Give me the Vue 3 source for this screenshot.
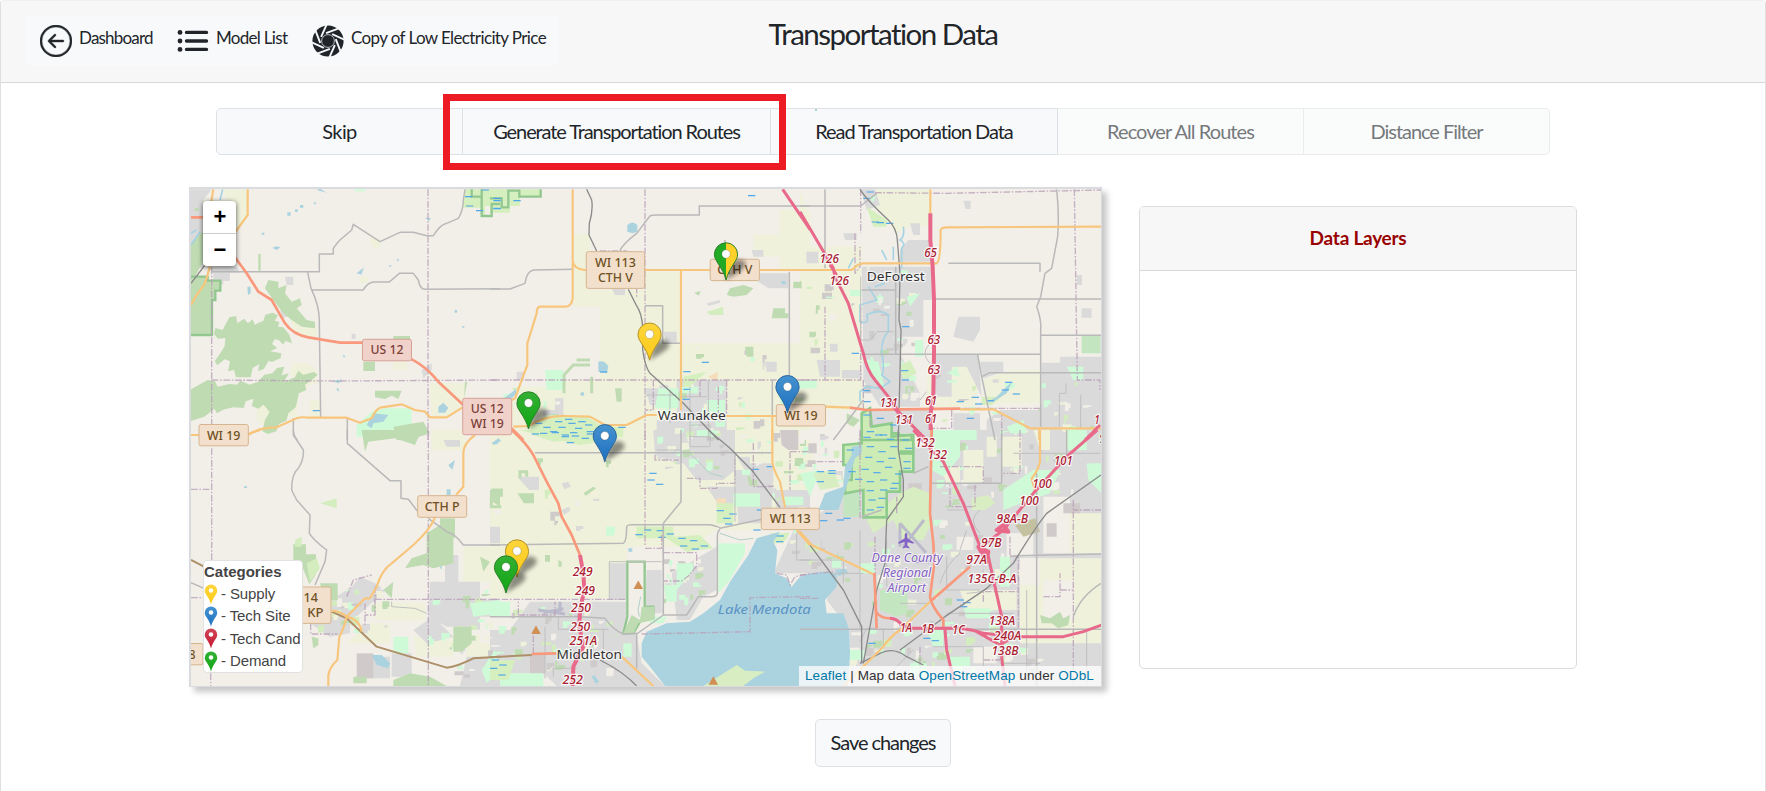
<script setup>
// Map drawing is split in six sheets; every sheet uses units of a third of a pixel.
const origin = {
  A: [180, 180], B: [180, 430],
  C: [490, 180], D: [490, 430],
  E: [800, 180], F: [800, 430],
}
const place = (s) => `translate(${origin[s][0]} ${origin[s][1]}) scale(0.33333)`

const areas = [
  // farmland
  ['C', 'farm', 'M250 163H300V330H465V275H570V490H960V780H0V690H60L80 620H200V600H330V380H250Z M790 165h105v65h-105z M870 90h90v180h-90z'],
  ['D', 'farm', 'M0 0H960V300H680L600 350H410V505H0Z'],
  ['E', 'farm', 'M0 28L30 130V200H185V600L200 690H0Z M230 28h160v110h-60l-40 20-60-70z M380 590l70-60h60v40h20v110h-150z M545 600l90-30h90v100h-160z'],
  ['A', 'farm', 'M130 28h75v80l-40 50z M340 550h40l30 20v40l-40 10-40-40z M310 710l30-110h20l-10 110z M750 610h110l-10 70-50 30h-45z M330 420l80 20v30l-60-5z M570 175h30v30h-20z M540 290h25v20h-25z M640 545h40v25h-40z M390 660h30v50h-30z M230 640l40-10 20 60-30 50-30-20z'],
  ['B', 'farm', 'M850 350h110v105h-110z M585 520h150v50h-150z M500 640h130v-60h-60z M755 0h100v60h-100z M700 620h120v60h-110z M860 640h100v40h-100z'],
  // residential
  ['A', 'urban', 'M33 28H95L70 60V265H33Z M80 260H170l10 18h-80z M100 278h50v25h-20v10h-30z M315 290h25v25h-20z M725 570l30-20v20l-25 25z M300 390l30-5v20l-20 10z M515 462h12v14h-12z'],
  ['B', 'urban', 'M455 510l60-40 25-30 45 20 30 20-20 20-60 55-40 20-40-30z M750 455H795V375H835V455H900V510H960V560H900V600L850 590H800L745 560Z M545 680h85v65h-85z M635 670h60v70h-60z M930 290h30v50h-30z M390 560h120v50l-60 10-60-40z M700 600l60-40 60 60-80 20z M860 680h100v88h-120z M790 30h50v20h-40z'],
  ['C', 'urban', 'M800 280h95v45h-60l-30-20z M465 625h95v50h-80z M560 600h150v180H500v-60h60z M195 655h25v35h-25z M365 325h40v20h-30z M520 455h40v35h-30z M825 545h35v30h-30z M785 210h35v20h-30z M950 215h10v35h-10z M80 575h22v25h-22z M650 370l40-10v8l-35 10z M160 690h60v20h-60z'],
  ['D', 'urban', 'M490 0H735V120L700 150H620L580 100H560L495 75Z M740 80h40v20h70v60h-60z M120 515H410V600L440 615L455 700L525 768H200L160 730H30V600H60Z M360 400h50v110h-50z M470 420h45v130h-20l-30-30z M545 430L680 350V480L640 500 600 570H560z M82 140h65v40h-30z M850 180h110v120h-90z M735 120h110v160h-100z M215 160l20-5 8 15-20 8z M215 240l20-10 8 10-20 15z M650 170h90v60h-50z M0 600h60v80h-60z'],
  ['E', 'urban', 'M182 28L225 28 240 75 200 90z M185 260H395V360H370V470H300V520L360 640V680H240L190 600V520Z M300 210L325 180H390V245H300z M405 525H535L545 650 500 560H455V650H400Z M540 545h70v30l-60 20z M725 548H780V530H905V780H560V720L600 690H725Z M475 410h65v40l-20 35-60-15z M845 385h30v28h-30z M20 215h35v35h-35z M330 130h30v35h-20z M50 540h70v50h-60z M125 570h60v25h-60z M130 160h40v20h-35z M490 62h22v25h-15z M830 285h16v30h-16z M200 690h190v90h-190z M460 700h80v50h-80z'],
  ['F', 'urban', 'M180 0H905V768H150V600L80 510 110 430 -80 430 0 260 60 250 150 180z'],
  // mixed land
  ['F', 'farm', 'M490 60h60v100h-60z M605 20h60v90h-60z M480 480h170v60h-150z M660 385H905V640H660z M810 250h95v120h-95z M420 110h60v50h-40z M700 0h50v60h-30z M560 20h30v60h-30z'],
  ['F', 'land', 'M730 200h80v170h-80z M660 385h60v80h-60z M520 650h70v50h-70z M730 450h90v120h-90z M0 0h60v30h-60z M620 310h80v70h-80z M300 10h70v40h-70z M470 320h50v40h-50z'],
  ['F', 'field', 'M325 160h40v90h-40z M25 40h25v30h-25z M790 220h50v30h-50z M740 280h30v40h-30z'],
  ['B', 'field', 'M530 670h50v75h-50z'],
  ['D', 'field', 'M870 0h55v60h-30l-20-15z M120 672h45v60h-45z'],
  ['F', 'olive', 'M645 285l60-20 15 40-50 15z'],
  ['C', 'peach', 'M655 590l30-15-5 30z'],
  ['D', 'peach', 'M680 205h28v22h-28z'],
  // parks
  ['A', 'park', 'M530 735l45-40 40-10h80v60l-15 20h-150z M525 28h30v6h-30z'],
  ['B', 'park', 'M530 0h130v20h-130z M640 620h45v50h-45z M870 520l90-10v40l-80 10z M905 720l40-60 15 60-40 40z'],
  ['C', 'park', 'M165 570h55v60h-50z M505 625h60v60h-70z M650 660h55v40h-50z M870 600h90v25h-90z M575 620h50v20h-50z'],
  ['D', 'park', 'M685 340h80v30l-45 80-35 40z M30 730h130v38h-130z M560 400h50v20l-50 60z M0 515h60v45h-60z M730 190h80v40h-80z M620 0h60v20h-60z M880 200h60v25h-60z M470 560h60l-10 20h-40z M520 465h40v50h-30z M400 640h25v40h-25z'],
  ['E', 'park', 'M0 600h50v25h-50z M395 750h135v30h-135z M185 535l50 10 20 80-40-30z M320 350l40-10-30 40z M345 480h25v50h-25z M150 330h35v18h-35z M800 560h50v40h-30z M620 740l50-20 10 40h-50z M200 55l30-10-10 20z M440 580l30-15 10 25z'],
  ['F', 'park', 'M395 0H480V80L430 140 395 120z M610 180l90-60h80l-30 70-60 20-80 30z M600 380h30v90h-30z M180 400h45v30h-45z M490 535h80v30h-70z M380 600h50v50h-30z M860 100h45v90l-40-40z M330 700h50v40h-50z M150 660h40v30h-40z M450 680h60v30h-60z M0 130l60-10-30 80z M800 0h60v60h-60z'],
  ['F', 'golf', 'M200 270l100-80 40-20 50 20v100l-20 40h-60l-30-60-60 40z M515 205l50-10 20 25-30 20h-40z M40 130l60-10 20 50-60 10z'],
  ['F', 'grove', 'M240 480H322V550L290 560L240 540z M130 190h50v70h-50z'],
  ['E', 'grove', 'M845 468H902V520H845z'],
  // woods
  ['A', 'wood', 'M33 290h50v12h38v30h-15v28h-10v105H33z'],
  ['A', 'wood', 'M265 300l30 5v20l25-10-5 25 20 25 25-10 5 20-15 10 30 35 25 5v20l-40-5-30-20-25-20-30-40-25-35z'],
  ['A', 'wood', 'M148 412l20-4 4 22 20-14 12 14 14-12 6 16 26-12 6-18 22-6 16 8-10 16 14 4-4 14 16 2 18 22 8 26-20-8-6 12-14-14-12-2-8 14 16 12-22 10 34 6-2 14-26 12-10-4-14 24-18 8 4-22-20 12-6 28h-44l-6-22-18 4 6-30-16-6-22 18-8-12 18-26 12-20 2-24-22 2-12-14 4-18 22 6 6-12z'],
  ['A', 'wood', 'M33 628l50-28 22 4 8 16 36-8 22 2 10-12 28 12 24-8 20-22 24-4 14-16 22-4-8 26 22-6-16 26 34-14 10-20 14 12 34-8 10 8-20 18-18 12 4 16-22 10-10 42-22 18-6 22-22 10-8 22-26 8-16-8 8-34 14-24-18-22-16 12-20-8 6-22-24 8-6 20-30-2-28 6-22 12-8-14-30 24-42 14z'],
  ['A', 'wood', 'M550 545h35v28h-35z M640 468h50v12h-50z M585 632h80l-10 25-20-10-20 10-30-5z M33 190l40-40v90l-40 70z M235 222h7v50h-7z M640 740l90-15 20 35-60 20h-40z M855 605h7l-10 50z'],
  ['B', 'wood', 'M780 265h45v60h-5v75l-60 15-30-10-55 10 20-30 45-15v-60l40-25z M340 343h38v30h30v60l-20 30-20-50-28-20z M420 460h53v50h-20l-30-40z M820 590h55v50l-30 25h-25z M640 750l50-20 60 10 50 28H640z M545 0h180l-20 45-60-20-80 10-10 30z M610 480l30-25-5 50z M395 620l20 5v20l-15 10z M930 180h30v50l-30-20z M900 380l30 15-20 30z M520 740h40v20h-40z'],
  ['C', 'wood', 'M720 325l40-10 30 10-20 20-40 5-20-5z M850 385h35v15h10v15h-50z M765 500h25v30h-20z M910 305h25v20h-25z M375 625h20v40h-15z M612 338l20-5-5 14z'],
  ['C', 'woodLine', 'M222 640V585L250 555H300 M260 540h40 M305 640v-50'],
  ['D', 'wood', 'M82 190h50v30h-30z M280 190l30-20 8 5-30 22z M165 375h15v20h-15z M205 390l10 5v15h-10z'],
  ['D', 'woodLine', 'M4 180h30v20M4 200v30h30 M90 145V125h20v15'],
  ['F', 'wood', 'M720 555l30 10 30-20 10 20 20-10-5 30-30 10-20-15-30 0z M135 445h15v10h-15z'],
  ['E', 'wood', 'M140 700l40 20-20 20-20-10z M0 300l5 10-5 10z'],
  ['C', 'lush', 'M650 395l50-15v25h-40z'],
  ['B', 'lush', 'M420 220l50-15v30z M380 400l30-15 10 30-30 40z M345 330l20-10v30h-20z'],
  // wetlands
  ['A', 'wet', 'M855 28h105v60l-20 5v-15h-25v30h-12v-25h-55z'],
  ['C', 'wet', 'M0 28h150v20h-60v30h-30v20h-60z M120 740l50-35 120 5 50 30h60v30l-110 5-100 10-60-20z M580 590l70-15-50 45h-20z'],
  ['D', 'wet', 'M90 0h240v35l-60 10-100-25z M440 290h110v30l80-5 40 40-80 10-60-40h-90z M680 220h50v60h-50z M0 690h75l-20 60H0z M840 310h60l-20 30h-30z'],
  ['E', 'wet', 'M200 80l60 40v20h-40z M545 650h60l-30 25h-30z M300 560l30-20 20 40-40 20z'],
  ['A', 'reserve', 'M33 290h50v12h38v30h-15v28h-10v105H33 M905 28v80h30V72h25 M875 28v22h30'],
  ['C', 'reserve', 'M152 28V50H88V32H55v50H35V55H0'],
  ['F', 'swamp', 'M130 45L185 40V10H295V15H340V65H300V70H340V125H300V185H260V262H190V180L135 190V150h20V105h-25z'],
  ['E', 'swamp', 'M185 780V700l25-15 5 55 60-10v40l60-5v15z'],
  ['D', 'reserve', 'M412 395H464V530H490V565L450 575 430 610H400L412 560Z'],
  ['D', 'wood', 'M400 610L425 555 450 570 455 530H492V568L445 580 430 612z'],
  // water
  ['D', 'water', 'M870 305L800 325L775 375L720 455L690 510L640 550L600 575L530 580L470 605L455 640V680L480 710L525 768H1075L1080 670L1078 600L1060 550L1010 550L1005 510L1040 470V430L1000 425L960 430L930 440L905 470L890 445L855 430L862 360L850 335Z'],
  ['D', 'golf', 'M640 768L740 705L765 722L825 725L790 745L760 768Z'],
  ['A', 'water', 'M560 735l20-35 45 5-15 20-30 5-5 15z M775 680l15-12 15 15-10 15h-20z M202 320h10v20l-8 5z M277 204l12-5 12 3-10 8z M735 113l18 2-6 8z M322 97h10v10h-10z M360 75h10v8h-10z M345 88h8v8h-8z M400 66l10 3-6 5z M245 158h8v6h-8z M457 604l30-6-10 12z M468 625l10 2-4 8z M488 525l8 2-4 8z M530 280l22-18-8 22z M625 257l10-3-4 8z M650 238h8l-5 8z M824 390h7v8h-7z M847 438h6v5h-6z M410 30l10-4 20 12z'],
  ['B', 'water', 'M575 675h30l25 25-5 15-35-10z M800 195v-17h12v17z M805 105l20-15-8 30z M935 40l20-15 8 8-20 12z M778 408l8 2-2 9z M192 169h9v5h-9z'],
  ['C', 'water', 'M412 135q15-15 30 0v20l-15 5-15-5z M325 545q20-5 30 15l-5 20-25-5z M42 655l36-28v15l-20 20z M270 640l10-5 3 10-8 4z M875 303h12v10h-12z'],
  ['D', 'water', 'M415 355h12v10h-12z M5 40l25-15-8 18z M340 20h10v8h-10z M305 740l8-5 14 20-10 6z'],
  ['E', 'water', 'M558 668L590 650 615 625 637 603 620 640 580 665z'],
  ['F', 'water', 'M55 240L75 190 130 170 135 110 155 75V50L185 45 185 70 165 85 150 140 115 240z M105 420l30-5 10 15-30 8z'],
  ['E', 'stream', 'M310 140q5 30-10 40q20 10 5 25v60 M245 210l15 30 M280 200v40 M205 320l25 40-50 15v50q30 10 20-20q40-20 65 0v50q-20 20-20 60q10 60 0 70l25 20-30 20-40-5-20 15v30 M160 235l-15 30 M225 320l30-10'],
  ['A', 'stream', 'M128 28L120 60 M33 195L60 155 M33 160 L50 150'],
  ['D', 'creek', 'M452 500l-8 40 4 20 M600 70l60 60 40 10 M690 310l60 20 40-5'],
  ['F', 'runway', 'M300 280L378 368M372 270L310 350M300 280V350M345 395h50'],
  ['D', 'runway', 'M145 540L225 552 M210 515V550 M160 548l60-12'],
]

const lines = [
  ['A', 'bound', 'M95 262V780 M744 28V780 M95 600L470 603 960 600'],
  ['B', 'bound', 'M95 55V390 M92 730V768 M33 178H95 M33 503H72 M745 0V768 M585 508H960 M500 500L520 450 575 435 M392 580v32h80 M555 520v70 M585 470v85h-30'],
  ['C', 'bound', 'M465 28V780 M0 600H960 M490 600V690H465 M710 600V700 M630 600V650 M685 620v80 M330 213h80 M440 320v30'],
  ['D', 'bound', 'M465 0V350 M0 508H410 M520 285V555 M455 612L780 605V503L960 500 M590 145H630V175H680V160H735V68 M520 368h100v40l-25 30-20 15H520 M85 555V515 M130 672V600 M900 65V180 M790 40V170H850 M495 75v15h70 M465 355h50v-40 M85 555h110v-40 M860 430l30 5 10 30 15-25 40-8 M900 65h60'],
  ['E', 'bound', 'M182 28V160 M225 38L440 40 905 30 M823 28L832 600H900V630 M182 380V600H0 M190 600V690H210V740 M720 685H480 M455 690V745H395 M75 380V600 M165 160v120l15-20v-60 M605 780V705'],
  ['F', 'bound', 'M420 110H550V160H525V230H450V165 M630 320V380H655V600 M0 435L100 425 M225 320V440 M820 210V768 M550 515V485H655 M780 480H820 M660 0V130H610 M730 500H780V430 M905 240l-85 0 M180 0v270 M50 95h80 M0 505h60 M290 250v-50 M360 650v90 M600 650v40h-50'],
  ['F', 'grey thin', 'M180 300v300 M100 430h90 M0 390h130v70 M440 380v100h100 M500 300l-20 60 M260 330v140 M230 595h-30l-20 40 M250 600v50 M400 650h150v60 M440 550h200 M440 240h60 M540 310q-40-40 0-70 M420 460q20-60 60-90 M500 490q60 0 100-40 M300 520h90 M680 480v260 M600 700h120 M860 600v168 M280 720l60-60 M640 70h260'],
  ['A', 'grey', 'M95 275H418V222H460V205Q470 190 480 180L515 150 520 133 600 185 660 157H700L740 167H760Q780 135 800 130L835 115Q850 90 850 60L855 28 M383 278L393 325Q420 380 418 430L422 712 M393 330H550Q560 310 580 306H628L658 280H700L715 300Q720 328 735 328L960 326 M340 715V755Q342 770 352 780 M502 715V780'],
  ['B', 'grey', 'M340 0V15L370 60Q372 90 355 115Q335 130 335 180L350 210 390 255 388 310Q400 330 440 360L435 395 405 465 M502 0V40L630 152H663V205L685 208 712 243 M745 265L800 305Q825 310 850 345L960 345 M33 458L72 475'],
  ['B', 'grey thin', 'M635 515v15l70 5 35 15'],
  ['C', 'grey', 'M0 327H60L105 310Q110 275 130 270L250 268 M390 213Q395 195 440 160L480 108Q485 105 500 105H628V78H960 M465 377H518V490H573 M898 275V605 M705 180v30 M847 600v110'],
  ['C', 'grey thin', 'M600 780V620 M655 600V780 M540 630v100 M465 645h95 M570 650h80 M600 735h60v45'],
  ['D', 'grey', 'M135 68H850 M573 0V215L520 280V555L440 612V715 M0 345L400 340Q410 335 410 290Q412 284 425 284H660Q690 290 690 295L815 268 M690 298Q682 305 682 320V490Q680 500 665 500H625L590 555H520 M440 610L400 612Q370 600 345 565L270 560H0'],
  ['D', 'grey thin', 'M358 508V395H515 M165 745V590 M205 560v38h150 M190 740v-25h70 M340 600v100 M735 75v200 M600 20h60v30h-60z M500 60h70 M920 310v80h40'],
  ['E', 'grey', 'M75 28V265 M0 78H182L230 40 M770 28Q778 100 773 170L755 265 735 280 722 350 710 380Q725 420 722 450V740 M445 250H720V275 M400 357H903 M722 466H903 M185 523H722 M533 525L545 590L585 780 M545 590L570 578H905 M287 260V520 M185 330H287 M100 780L190 660'],
  ['E', 'grey thin', 'M182 290V480h30l20-25h50 M778 740V640h20v-30 M842 645v100 M390 490q-30 30 0 60 M360 660l20-25'],
  ['F', 'grey', 'M395 160H605 M605 0V160 M630 378L903 372 M903 460Q840 500 820 560 M710 130V768 M800 0V75 M340 130L385 110 M0 598H905 M185 260l60-20'],
  // railways
  ['B', 'brown', 'M33 390L72 410 M455 545L500 565 590 650 800 713Q830 710 880 685L960 680'],
  ['D', 'brown', 'M0 682L125 675'],
  ['C', 'rail', 'M290 28L305 60Q310 90 298 130L297 165 320 213 M415 328L440 378Q455 400 458 440V510Q465 560 480 580L580 670 685 780'],
  ['D', 'rail', 'M655 0L720 55 785 120 870 232 M330 690Q400 725 440 768'],
  ['E', 'rail', 'M180 28Q200 60 265 120Q290 145 292 180L300 280 297 420 303 450 295 780'],
  ['F', 'rail', 'M295 0V60L310 150V200L260 270 255 400 230 480 190 700 M0 305L130 480 185 590V700 M903 135L740 250Q700 300 640 400L560 475 435 560 300 660 M180 700L240 670Q280 650 320 680L370 705'],
  ['A', 'rail', 'M33 310L75 255'],
  // primary and secondary roads
  ['A', 'orange', 'M100 28L92 75 M203 28V105L165 158 M90 260L75 310 50 345 33 375 M33 765H60 M205 765Q235 742 290 742L350 715Q365 710 385 713H500L540 728 575 715Q585 690 600 683L665 673 705 690 735 695 750 712H800L848 682'],
  ['B', 'orange', 'M205 12L240 0 M885 15Q850 40 850 70V170L828 195 M765 263Q750 300 700 345L635 400Q605 420 590 470L570 505H555L500 560Q475 540 455 543 M500 560Q540 570 545 605 M500 560Q490 600 478 620L472 690Q450 710 445 735V768'],
  ['C', 'orange', 'M248 28V235Q245 268 290 270H960 M248 250V355Q245 380 225 380H150Q140 382 140 400L112 490V555Q95 600 75 655L65 660 M573 270V690 M70 740L115 738Q170 705 230 708L300 710 345 735H410L470 705H500 M705 708H860 M847 710V780'],
  ['D', 'orange', 'M395 680L490 768 M847 0V95Q850 120 870 155L885 232 M920 300L960 345'],
  ['E', 'orange', 'M391 28V100 M0 270H155Q175 250 190 250H410Q422 245 422 150Q425 142 440 142L903 140 M75 680L150 683 M480 688H580L690 745H903 M718 745V780'],
  ['F', 'orange', 'M0 305L35 345 225 435 M390 515L300 600Q270 620 250 650L130 768 M720 0V95Q715 120 695 145L705 185'],
  // trunk roads
  ['A', 'trunk', 'M33 112H70 M165 232L200 280L235 335L275 360L315 430Q340 465 385 472L480 488H560 M690 535Q740 560 775 605L850 675'],
  ['C', 'trunk', 'M65 745L100 780'],
  ['D', 'trunk', 'M65 0Q110 40 130 75L170 155 205 220 215 260 245 315 270 375 M125 672L200 670'],
  ['E', 'trunk', 'M150 683L200 690 300 688 480 686 M395 740v40'],
  ['F', 'trunk', 'M395 0L390 250 400 340 403 400 390 500Q395 530 430 570V600 M390 515L510 410 M223 430L230 595 M228 545Q240 565 270 565'],
  // motorways
  ['C', 'motor', 'M878 28L960 148'],
  ['D', 'motor wide', 'M270 375L280 430 283 480 270 540 268 590 280 650 250 710 248 768'],
  ['E', 'motor', 'M0 95L100 265 105 290 145 370 190 520Q200 570 225 600L265 650 300 700 380 780 M90 255l20 30 M280 680l20 25'],
  ['E', 'motor wide', 'M391 100V180L398 260 402 360V520L400 640 392 700V750'],
  ['E', 'motor', 'M855 780L900 735'],
  ['F', 'motor', 'M340 0L385 50 430 95 490 220 540 350 565 380 605 560 605 680 615 768 M892 0L800 80 700 190 610 300 545 350 M270 565Q290 565 305 585L330 595H480Q520 600 550 610L650 620H790L850 605 905 585 M530 605L600 645 L640 620 M435 600L440 660 465 768'],
  ['F', 'motor wide', 'M535 350l30 15-5 30z M590 300l35 5-15-20z'],
]

// Short strokes that mark marshy ground: [sheet, x, y]
const marsh = [
  ...[[855, 50], [905, 30], [940, 55], [858, 78], [888, 92], [940, 85], [398, 692]].map((p) => ['A', ...p]),
  ...[[10, 62], [70, 62], [10, 86], [135, 730], [160, 742], [195, 725], [225, 718], [205, 742], [235, 730], [265, 725], [255, 745], [285, 735], [150, 760], [185, 758], [215, 765], [245, 768], [290, 755], [320, 745], [385, 742], [580, 575], [635, 547], [580, 628], [578, 658], [330, 576], [774, 47]].map((p) => ['C', ...p]),
  ...[[125, 12], [180, 5], [215, 20], [240, 8], [275, 25], [230, 38], [290, 12], [478, 130], [498, 163], [472, 150], [436, 314], [462, 300], [500, 302], [505, 322], [530, 312], [565, 325], [600, 332], [570, 348], [605, 357], [632, 348], [680, 242], [700, 265], [718, 252], [705, 282], [790, 300], [800, 240], [5, 690], [28, 705], [0, 715], [25, 735], [860, 318], [858, 335], [830, 110], [785, 118]].map((p) => ['D', ...p]),
  ...[[200, 36], [190, 55], [215, 126], [230, 128], [258, 130], [306, 440], [303, 572], [305, 600], [155, 520], [188, 632], [190, 665], [470, 665], [515, 652], [525, 672], [500, 715], [615, 607], [638, 642], [605, 630], [560, 662], [190, 705], [230, 715], [270, 735], [200, 755], [240, 765]].map((p) => ['E', ...p]),
  ...[[190, 22], [225, 15], [260, 28], [305, 30], [140, 60], [200, 50], [235, 65], [270, 50], [315, 55], [195, 82], [230, 95], [265, 85], [310, 95], [145, 125], [185, 118], [220, 128], [255, 112], [285, 132], [310, 115], [165, 148], [200, 155], [240, 150], [275, 160], [200, 182], [240, 180], [270, 175], [205, 210], [235, 205], [200, 240], [230, 232], [50, 155], [85, 130], [75, 250], [110, 270], [60, 272], [85, 122], [50, 125], [130, 265], [470, 510], [480, 530], [490, 518], [370, 625], [395, 632], [205, 640]].map((p) => ['F', ...p]),
]

// Deterministic scatter of small plots over built-up ground.
let seed = 7
const rand = () => ((seed = (seed * 16807) % 2147483647) / 2147483647)
const zones = [
  ['E', 190, 260, 170, 420, 34], ['E', 400, 540, 130, 200, 10], ['E', 560, 590, 340, 180, 26],
  ['F', 200, 290, 180, 280, 22], ['F', 400, 150, 240, 420, 44], ['F', 150, 570, 500, 180, 60],
  ['F', 400, 0, 420, 200, 34], ['F', 650, 380, 240, 370, 34], ['F', 0, 320, 190, 100, 16], ['F', 0, 0, 130, 180, 22],
  ['D', 500, 0, 230, 130, 24], ['D', 740, 0, 210, 220, 30], ['D', 130, 530, 260, 220, 40], ['D', 0, 520, 110, 220, 14],
  ['D', 520, 380, 150, 150, 22], ['D', 860, 200, 90, 200, 8], ['C', 500, 610, 210, 160, 26], ['C', 720, 610, 230, 160, 18],
  ['C', 590, 490, 250, 80, 8], ['C', 20, 620, 200, 120, 8], ['B', 740, 480, 210, 270, 36], ['B', 480, 470, 150, 140, 16],
  ['A', 40, 30, 120, 200, 16], ['D', 10, 80, 400, 250, 10], ['E', 10, 300, 160, 280, 12], ['B', 400, 500, 100, 120, 12],
]
const tones = ['park', 'farm', 'wood', 'land', 'park', 'urban', 'lush', 'deep']
const plots = zones.flatMap(([s, x, y, w, h, n]) =>
  Array.from({ length: n }, () => {
    const pw = 6 + rand() * 24
    const ph = 5 + rand() * 22
    const px = x + rand() * (w - pw)
    const py = y + rand() * (h - ph)
    const k = rand() * 0.5
    return {
      s,
      tone: tones[Math.floor(rand() * tones.length)],
      d: `M${px.toFixed(0)} ${py.toFixed(0)}h${pw.toFixed(0)}v${(ph * (1 - k)).toFixed(0)}h${(-pw * k).toFixed(0)}v${(ph * k).toFixed(0)}h${(-pw * (1 - k)).toFixed(0)}z`,
    }
  }),
)

const shields = [
  { x: 362.5, y: 339.3, w: 49, h: 21.5, t: ['US 12'], tw: [33], trunk: true },
  { x: 462.7, y: 398.3, w: 49, h: 36.4, t: ['US 12', 'WI 19'], tw: [33, 33], trunk: true },
  { x: 199, y: 424.5, w: 49.3, h: 21.3, t: ['WI 19'], tw: [33.5] },
  { x: 417.7, y: 495.7, w: 49, h: 21.6, t: ['CTH P'], tw: [35] },
  { x: 271, y: 587, w: 60, h: 36.4, t: ['US 14', 'CTH KP'], tw: [34, 45] },
  { x: 170, y: 643.5, w: 33, h: 21.3, t: ['78'], tw: [14], shift: 2 },
  { x: 586.3, y: 251.7, w: 58.3, h: 36.7, t: ['WI 113', 'CTH V'], tw: [41, 35] },
  { x: 710.2, y: 259.2, w: 49.2, h: 21.4, t: ['CTH V'], tw: [35] },
  { x: 776.3, y: 404.6, w: 49.2, h: 21.4, t: ['WI 19'], tw: [33.5] },
  { x: 761.3, y: 508.2, w: 58, h: 21.4, t: ['WI 113'], tw: [41] },
]

// Motorway exit numbers: [text, centre x, baseline y, width]
const exits = [
  ['126', 829.3, 263, 19.5], ['126', 839.3, 285.3, 19.5], ['65', 930.5, 256.8, 12.7], ['63', 933.8, 344, 12.7],
  ['63', 933.8, 374.3, 12.7], ['61', 931, 404.8, 12], ['61', 931, 423, 12], ['131', 888.7, 407.3, 18],
  ['131', 904, 424.3, 18], ['132', 925, 446.5, 19.5], ['132', 937.3, 458.8, 19.5], ['101', 1063.3, 465, 18.7],
  ['100', 1042, 488, 19.5], ['100', 1029, 504.7, 19.5], ['98A-B', 1012.3, 523.3, 31.5], ['97B', 991.3, 547, 20.5],
  ['97A', 976.5, 564, 20.5], ['135C-B-A', 992, 583.4, 49], ['138A', 1002, 625, 26.5], ['240A', 1007.5, 640, 27.5],
  ['138B', 1005, 655, 27], ['1A', 906, 631.5, 12], ['1B', 927.5, 633.4, 12.7], ['1C', 958.5, 633.8, 13],
  ['249', 582.7, 576, 20], ['249', 585, 595.4, 20], ['250', 581, 612, 20], ['250', 580.3, 630.7, 20],
  ['251A', 583.3, 644.7, 27.5], ['252', 572.7, 683.5, 20.5], ['1', 1097, 424, 5.5],
]

const peaks = [[638.3, 585], [536, 630], [713.3, 680.8]]

const pins = [
  { x: 787.5, y: 412.7, fill: 'blue' },
  { x: 726, y: 280, fill: 'split' },
  { x: 649.6, y: 360.2, fill: 'yellow' },
  { x: 528.5, y: 429, fill: 'green' },
  { x: 604.8, y: 461.8, fill: 'blue' },
  { x: 517, y: 577, fill: 'yellow' },
  { x: 506, y: 593, fill: 'green' },
]
const pinShape = 'M0 0C-1.6-6.5-4.4-11-8.2-17C-10.2-20.2-11.6-22.4-11.6-25.6A11.6 11.6 0 0 1 11.6-25.6C11.6-22.4 10.2-20.2 8.2-17C4.4-11 1.6-6.5 0 0Z'

const legend = [
  { name: 'Supply', fill: 'yellow' },
  { name: 'Tech Site', fill: 'blue' },
  { name: 'Tech Cand', fill: 'red' },
  { name: 'Demand', fill: 'green' },
]

const blades = Array.from({ length: 8 }, (_, i) => i * 45)
</script>

<template>
  <div class="page">
    <header class="topbar">
      <nav class="crumbs">
        <a class="crumb dash">
          <svg width="32" height="32" viewBox="0 0 16 16" fill="#212529"><path fill-rule="evenodd" d="M1 8a7 7 0 1 0 14 0A7 7 0 0 0 1 8m15 0A8 8 0 1 1 0 8a8 8 0 0 1 16 0m-4.5-.5a.5.5 0 0 1 0 1H5.707l2.147 2.146a.5.5 0 0 1-.708.708l-3-3a.5.5 0 0 1 0-.708l3-3a.5.5 0 1 1 .708.708L5.707 7.500z" stroke="#212529" stroke-width=".2" /></svg>
          <span>Dashboard</span>
        </a>
        <a class="crumb list">
          <svg width="32" height="32" viewBox="0 0 32 32"><g stroke="#212529" stroke-width="3.400" stroke-linecap="round"><path d="M9.500 7.400H29.500M9.500 16H29.500M9.500 24.400H29.500" /></g><g fill="#212529"><circle cx="3" cy="7.400" r="2.400" /><circle cx="3" cy="16" r="2.400" /><circle cx="3" cy="24.400" r="2.400" /></g></svg>
          <span>Model List</span>
        </a>
        <a class="crumb copy">
          <svg width="32" height="32" viewBox="-16 -16 32 32">
            <circle r="15.600" fill="#212529" />
            <g stroke="#f8f9fb" stroke-width="1.900"><path v-for="a in blades" :key="a" d="M-3.500-7.200L8.500-15" :transform="`rotate(${a + 12})`" /></g>
            <circle r="6.400" fill="#212529" stroke="#f8f9fb" stroke-width=".7" />
          </svg>
          <span>Copy of Low Electricity Price</span>
        </a>
      </nav>
      <h1 class="title">Transportation Data</h1>
    </header>

    <main class="content">
      <div class="steps">
        <button class="step skip"><span>Skip</span></button>
        <button class="step gen"><span>Generate Transportation Routes</span></button>
        <button class="step read"><span>Read Transportation Data</span></button>
        <button class="step recover" disabled><span>Recover All Routes</span></button>
        <button class="step filter" disabled><span>Distance Filter</span></button>
        <i class="speck"></i>
        <div class="highlight"></div>
      </div>

      <div class="panels">
        <section class="map">
          <svg class="canvas" width="910" height="497" viewBox="191 189 910 497">
            <defs>
              <linearGradient id="blue" x2="0" y2="1"><stop stop-color="#4793d0" /><stop offset="1" stop-color="#1b6fc0" /></linearGradient>
              <linearGradient id="green" x2="0" y2="1"><stop stop-color="#34b034" /><stop offset="1" stop-color="#0fa514" /></linearGradient>
              <linearGradient id="yellow" x2="0" y2="1"><stop stop-color="#fdd53a" /><stop offset="1" stop-color="#fccb1a" /></linearGradient>
              <linearGradient id="red" x2="0" y2="1"><stop stop-color="#cf4658" /><stop offset="1" stop-color="#c5162f" /></linearGradient>
              <linearGradient id="split"><stop offset=".5" stop-color="#22aa25" /><stop offset=".5" stop-color="#fdd02a" /></linearGradient>
              <filter id="soft" x="-50%" y="-50%" width="200%" height="200%"><feGaussianBlur stdDeviation="2" /></filter>
            </defs>
            <rect class="land" x="191" y="189" width="910" height="497" />
            <path v-for="(a, i) in areas.slice(0, 11)" :key="'a' + i" :class="a[1]" :transform="place(a[0])" :d="a[2]" />
            <path v-for="(p, i) in plots" :key="'p' + i" :class="p.tone" :transform="place(p.s)" :d="p.d" />
            <path v-for="(a, i) in areas.slice(11)" :key="'b' + i" :class="a[1]" :transform="place(a[0])" :d="a[2]" />
            <path v-for="(m, i) in marsh" :key="'m' + i" class="tick" :transform="place(m[0])" :d="`M${m[1]} ${m[2]}h22`" />
            <path v-for="(l, i) in lines" :key="'l' + i" class="line" :class="l[1]" :transform="place(l[0])" :d="l[2]" />

            <path v-for="(p, i) in peaks" :key="'k' + i" class="peak" :d="`M${p[0]} ${p[1] - 4.500}l4.800 8.500h-9.600z`" />
            <path class="plane" d="M906 533c1 0 1.300 1.400 1.300 2.600v2.600l6.300 4v1.600l-6.300-1.900v3.600l2 1.700v1.200l-3.300-.9-3.300.9v-1.200l2-1.700v-3.600l-6.300 1.900v-1.600l6.300-4v-2.600c0-1.200.3-2.600 1.300-2.600z" />

            <g v-for="(s, i) in shields" :key="'s' + i" class="shield" :class="{ pink: s.trunk }">
              <rect :x="s.x" :y="s.y" :width="s.w" :height="s.h" rx="2" />
              <text v-for="(t, n) in s.t" :key="t" :x="s.x + s.w / 2 + (s.shift || 0)" :y="s.y + 15 + n * 15" :textLength="s.tw[n]" lengthAdjust="spacingAndGlyphs">{{ t }}</text>
            </g>

            <text v-for="(e, i) in exits" :key="'e' + i" class="exit" :x="e[1]" :y="e[2]" :textLength="e[3]" lengthAdjust="spacingAndGlyphs">{{ e[0] }}</text>

            <g class="town">
              <text x="691.800" y="420" textLength="68" lengthAdjust="spacingAndGlyphs">Waunakee</text>
              <text x="895.700" y="281" textLength="58" lengthAdjust="spacingAndGlyphs">DeForest</text>
              <text x="589.300" y="659.300" textLength="65.500" lengthAdjust="spacingAndGlyphs">Middleton</text>
              <text x="1103" y="443" textLength="9">S</text>
            </g>
            <text class="lake" x="764.300" y="613.700" textLength="93" lengthAdjust="spacingAndGlyphs">Lake Mendota</text>
            <g class="airport">
              <text x="907" y="562.300" textLength="71" lengthAdjust="spacingAndGlyphs">Dane County</text>
              <text x="907" y="577.300" textLength="48.500" lengthAdjust="spacingAndGlyphs">Regional</text>
              <text x="906.700" y="592" textLength="38.500" lengthAdjust="spacingAndGlyphs">Airport</text>
            </g>

            <g v-for="(p, i) in pins" :key="'n' + i" :transform="`translate(${p.x} ${p.y})`">
              <path d="M0 0L5-17Q13-23 18-19T13-8Z" fill="#000" opacity=".42" filter="url(#soft)" />
              <path :d="pinShape" :fill="`url(#${p.fill})`" class="pin" :class="p.fill" />
              <circle cy="-26" r="4.200" fill="#fff" class="eye" />
            </g>
          </svg>

          <div class="zoom">
            <a>+</a>
            <a>−</a>
          </div>

          <div class="legend">
            <b>Categories</b>
            <div v-for="l in legend" :key="l.name" class="entry">
              <svg width="14" height="21" viewBox="-12.500 -38 25 39"><path :d="pinShape" :fill="`url(#${l.fill})`" /><circle cy="-26" r="4.200" fill="#fff" /></svg>
              <span>- {{ l.name }}</span>
            </div>
          </div>

          <div class="credit"><a>Leaflet</a> | Map data <a>OpenStreetMap</a> under <a>ODbL</a></div>
        </section>

        <aside class="layers">
          <h2>Data Layers</h2>
        </aside>
      </div>

      <button class="save"><span>Save changes</span></button>
    </main>
  </div>
</template>

<style>
html, body { margin: 0; background: #fff; overflow: hidden; }
</style>

<style scoped>
.page {
  box-sizing: border-box;
  width: 1766px;
  height: 791px;
  border: 1px solid #dfdfdf;
  border-top-color: #f0f0f0;
  border-bottom: 0;
  border-radius: 4px 4px 0 0;
  font-family: Lato, "Liberation Sans", sans-serif;
  color: #212529;
  overflow: hidden;
}
.topbar {
  display: grid;
  grid-template-columns: 1fr auto 1fr;
  height: 81px;
  background: #f7f7f7;
  border-bottom: 1px solid #d8d8d8;
}
.crumbs {
  display: flex;
  justify-self: start;
  width: 532px;
  height: 50px;
  margin: 15px 0 0 25px;
  border-radius: 5px;
  background: #f8f9fb;
}
.crumb { display: flex; align-items: flex-start; font-size: 17px; line-height: 20px; white-space: nowrap; }
.crumb svg { display: block; margin-top: 9px; flex: none; }
.crumb span { margin: 12px 0 0 7px; }
.dash { margin-left: 14px; width: 137px; letter-spacing: -0.8px; }
.list { width: 135px; letter-spacing: -0.7px; }
.copy { letter-spacing: -0.61px; }
.title { margin: 15px 0 0; font-size: 29.500px; line-height: 36px; font-weight: 400; letter-spacing: -1.52px; }

.content { display: flex; flex-direction: column; align-items: center; }
.steps { position: relative; display: flex; width: 1334px; height: 47px; margin-top: 25px; }
.step {
  box-sizing: border-box;
  padding: 0 0 1px;
  border: 1px solid #dde0e4;
  border-left-width: 0;
  background: #f8f9fb;
  color: #212529;
  font: 400 20px/24px Lato, sans-serif;
  white-space: nowrap;
}
.step:disabled { background: #fafcfc; color: #76797c; border-color: #e9ebec; }
.skip { width: 247px; border-left-width: 1px; border-radius: 5px 0 0 5px; letter-spacing: -0.6px; }
.gen { width: 308px; letter-spacing: -1.1px; }
.read { width: 287px; letter-spacing: -1.06px; }
.recover { width: 246px; letter-spacing: -0.93px; }
.filter { width: 246px; border-radius: 0 5px 5px 0; letter-spacing: -1.05px; }
.highlight {
  position: absolute;
  left: 227px;
  top: -14px;
  box-sizing: border-box;
  width: 343px;
  height: 76px;
  border: 7px solid #ed1c24;
}
.speck { position: absolute; left: 599px; top: 1px; width: 2px; height: 2px; background: #a9d3cb; }

.panels { display: flex; align-items: flex-start; width: 1388px; margin-top: 32px; }
.map {
  position: relative;
  box-sizing: border-box;
  width: 913px;
  height: 500px;
  border: 2px solid #d9dbdf;
  border-right-width: 1px;
  border-bottom-width: 1px;
  box-shadow: 5px 5px 6px rgba(0, 0, 0, 0.22);
}
.canvas { display: block; }

.land { fill: #f2efe9; }
.farm { fill: #eff1da; }
.urban { fill: #dadada; }
.deep { fill: #cfcbcb; }
.field { fill: #d1caca; }
.olive { fill: #c4c1a0; }
.peach { fill: #f5dcba; }
.park { fill: #cffad8; }
.golf { fill: #d8eec2; }
.grove { fill: #c3e6c1; }
.wood { fill: #bfdbb2; }
.woodLine { fill: none; stroke: #bfdbb2; stroke-width: 9; }
.lush { fill: #d4edbf; }
.wet { fill: #d6efbe; }
.water { fill: #aad3df; }
.swamp { fill: #cdebb5; stroke: #8ecb8c; stroke-width: 8; }
.reserve { fill: none; stroke: #93c790; stroke-width: 7; }
.stream { fill: none; stroke: #a6d3e4; stroke-width: 5; }
.creek { fill: none; stroke: #b0d0c8; stroke-width: 3; }
.runway { fill: none; stroke: #bbbbcc; stroke-width: 9; }
.tick { fill: none; stroke: #4ea6ea; stroke-width: 3.500; }
.line { fill: none; stroke-linejoin: round; }
.bound { stroke: #b99fb8; stroke-width: 4; stroke-dasharray: 20 5 5 5; opacity: 0.8; }
.grey { stroke: #b9b9b9; stroke-width: 4.500; }
.grey.thin { stroke: #c0c0c0; stroke-width: 3; }
.rail { stroke: #8a8a8a; stroke-width: 4; }
.brown { stroke: #ad8f68; stroke-width: 6; }
.orange { stroke: #f8c57c; stroke-width: 6.500; }
.trunk { stroke: #f9987b; stroke-width: 8; }
.motor { stroke: #e8698a; stroke-width: 9; }
.motor.wide { stroke-width: 12; }
.peak { fill: #d08f55; }
.plane { fill: #8461c4; }
.shield rect { fill: #f3e0cc; stroke: #d6b48f; stroke-width: 1; }
.shield.pink rect { fill: #f1d2cb; stroke: #d8a197; }
.shield text { font: 500 12.500px "Noto Sans", sans-serif; fill: #6f5124; text-anchor: middle; }
.shield.pink text { fill: #7c3f37; }
.exit {
  font: italic 500 12.500px "Noto Sans", sans-serif;
  fill: #a8202f;
  stroke: rgba(255, 255, 255, 0.85);
  stroke-width: 2.500;
  paint-order: stroke;
  text-anchor: middle;
}
.town text {
  font: 13px "Noto Sans", sans-serif;
  fill: #333;
  stroke: rgba(255, 255, 255, 0.7);
  stroke-width: 2.500;
  paint-order: stroke;
  text-anchor: middle;
}
.lake { font: italic 13px "Noto Sans", sans-serif; fill: #5b92c4; text-anchor: middle; }
.airport text {
  font: italic 12.500px "Noto Sans", sans-serif;
  fill: #8461c4;
  stroke: rgba(255, 255, 255, 0.7);
  stroke-width: 2;
  paint-order: stroke;
  text-anchor: middle;
}
.pin { stroke-width: 1; }
.pin.blue { stroke: #2b669c; }
.pin.green, .pin.split { stroke: #2c7f2a; }
.pin.yellow { stroke: #b3922a; }
.eye { stroke: rgba(0, 0, 0, 0.3); stroke-width: 0.600; }

.zoom {
  position: absolute;
  left: 12px;
  top: 12px;
  width: 33px;
  border-radius: 4px;
  background: #fff;
  box-shadow: 0 1px 5px rgba(0, 0, 0, 0.65);
  color: #000;
}
.zoom a { display: block; height: 32px; padding-left: 1px; text-align: center; font: bold 22px/31px "Liberation Sans", sans-serif; }
.zoom a + a { border-top: 1px solid #ccc; }

.legend {
  position: absolute;
  left: 12px;
  top: 371px;
  box-sizing: border-box;
  width: 100px;
  height: 113px;
  border: 1px solid #e2e2e2;
  border-radius: 4px;
  background: #fff;
  color: #444;
  font: 15px/22px "Liberation Sans", sans-serif;
  white-space: nowrap;
}
.legend b { display: block; height: 22px; line-height: 21px; }
.entry { display: flex; align-items: center; height: 22.300px; }
.entry svg { display: block; margin-right: 3px; flex: none; }
.entry span { letter-spacing: -0.1px; }
.credit {
  position: absolute;
  right: 0;
  bottom: 0;
  box-sizing: border-box;
  width: 302px;
  height: 20px;
  padding-left: 6px;
  background: rgba(255, 255, 255, 0.75);
  color: #333;
  font: 13.500px/19px "Liberation Sans", sans-serif;
  letter-spacing: 0.11px;
  white-space: nowrap;
}
.credit a { color: #0078a8; }

.layers {
  box-sizing: border-box;
  width: 438px;
  height: 463px;
  margin: 19px 0 0 37px;
  border: 1px solid #dcdcdc;
  border-radius: 5px;
}
.layers h2 {
  margin: 0;
  height: 63px;
  border-bottom: 1px solid #d8d8d8;
  border-radius: 4px 4px 0 0;
  background: #f7f7f7;
  color: #990000;
  font: bold 19px/62px Lato, sans-serif;
  text-align: center;
  letter-spacing: -0.25px;
}
.save {
  box-sizing: border-box;
  width: 136px;
  height: 48px;
  margin-top: 32px;
  padding: 0 0 2px;
  border: 1px solid #dde0e4;
  border-radius: 5px;
  background: #f8f9fb;
  color: #212529;
  font: 400 20px/24px Lato, sans-serif;
  letter-spacing: -1.05px;
  white-space: nowrap;
}
</style>
